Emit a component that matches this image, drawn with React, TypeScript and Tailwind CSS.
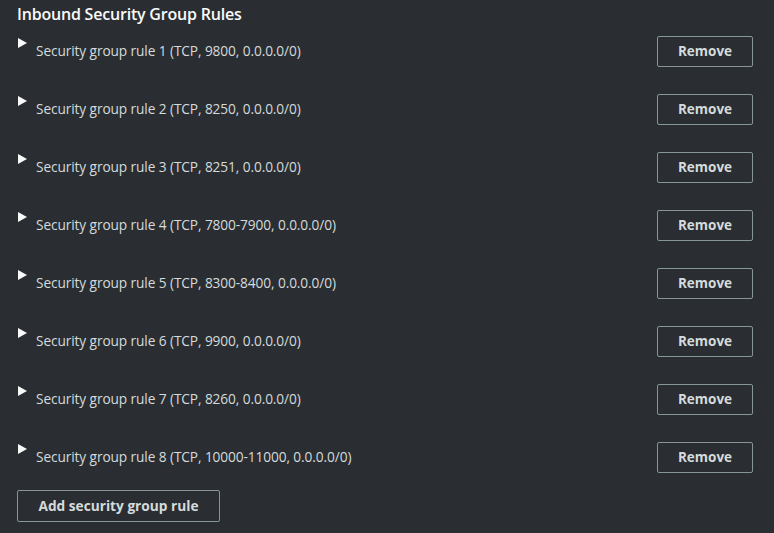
const rules = [
  "TCP, 9800, 0.0.0.0/0",
  "TCP, 8250, 0.0.0.0/0",
  "TCP, 8251, 0.0.0.0/0",
  "TCP, 7800-7900, 0.0.0.0/0",
  "TCP, 8300-8400, 0.0.0.0/0",
  "TCP, 9900, 0.0.0.0/0",
  "TCP, 8260, 0.0.0.0/0",
  "TCP, 10000-11000, 0.0.0.0/0",
];

function Caret() {
  return (
    <svg width="9" height="10" viewBox="0 0 9 10" className="mt-[2px] shrink-0">
      <path d="M0 0 L9 5 L0 10 Z" fill="#fafafa" />
    </svg>
  );
}

export default function App() {
  return (
    <div className="h-[533px] w-[774px] overflow-hidden bg-[#2a2e33] font-['Open_Sans',sans-serif] pl-[17px] pr-[21px]">
      <h2 className="pt-[2px] h-[36px] text-[16px] font-semibold text-[#fafafa] tracking-[-0.2px]">
        Inbound Security Group Rules
      </h2>
      <div className="flex flex-col gap-[27px]">
        {rules.map((r, i) => (
          <div key={i} className="flex items-start">
            <div className="flex flex-1 items-start">
              <div className="pl-[1px] w-[19px]">
                <Caret />
              </div>
              <span className="mt-[5px] text-[13.7px] leading-[20px] text-[#d5dbdb] tracking-[-0.1px]">
                Security group rule {i + 1} ({r})
              </span>
            </div>
            <button className="h-[31px] w-[96px] rounded-[2px] border border-[#879596] text-[13.5px] font-bold text-[#d5dbdb]">
              Remove
            </button>
          </div>
        ))}
      </div>
      <button className="mt-[17px] h-[32px] w-[203px] rounded-[2px] border border-[#879596] text-[13.7px] font-bold text-[#d5dbdb]">
        Add security group rule
      </button>
    </div>
  );
}
